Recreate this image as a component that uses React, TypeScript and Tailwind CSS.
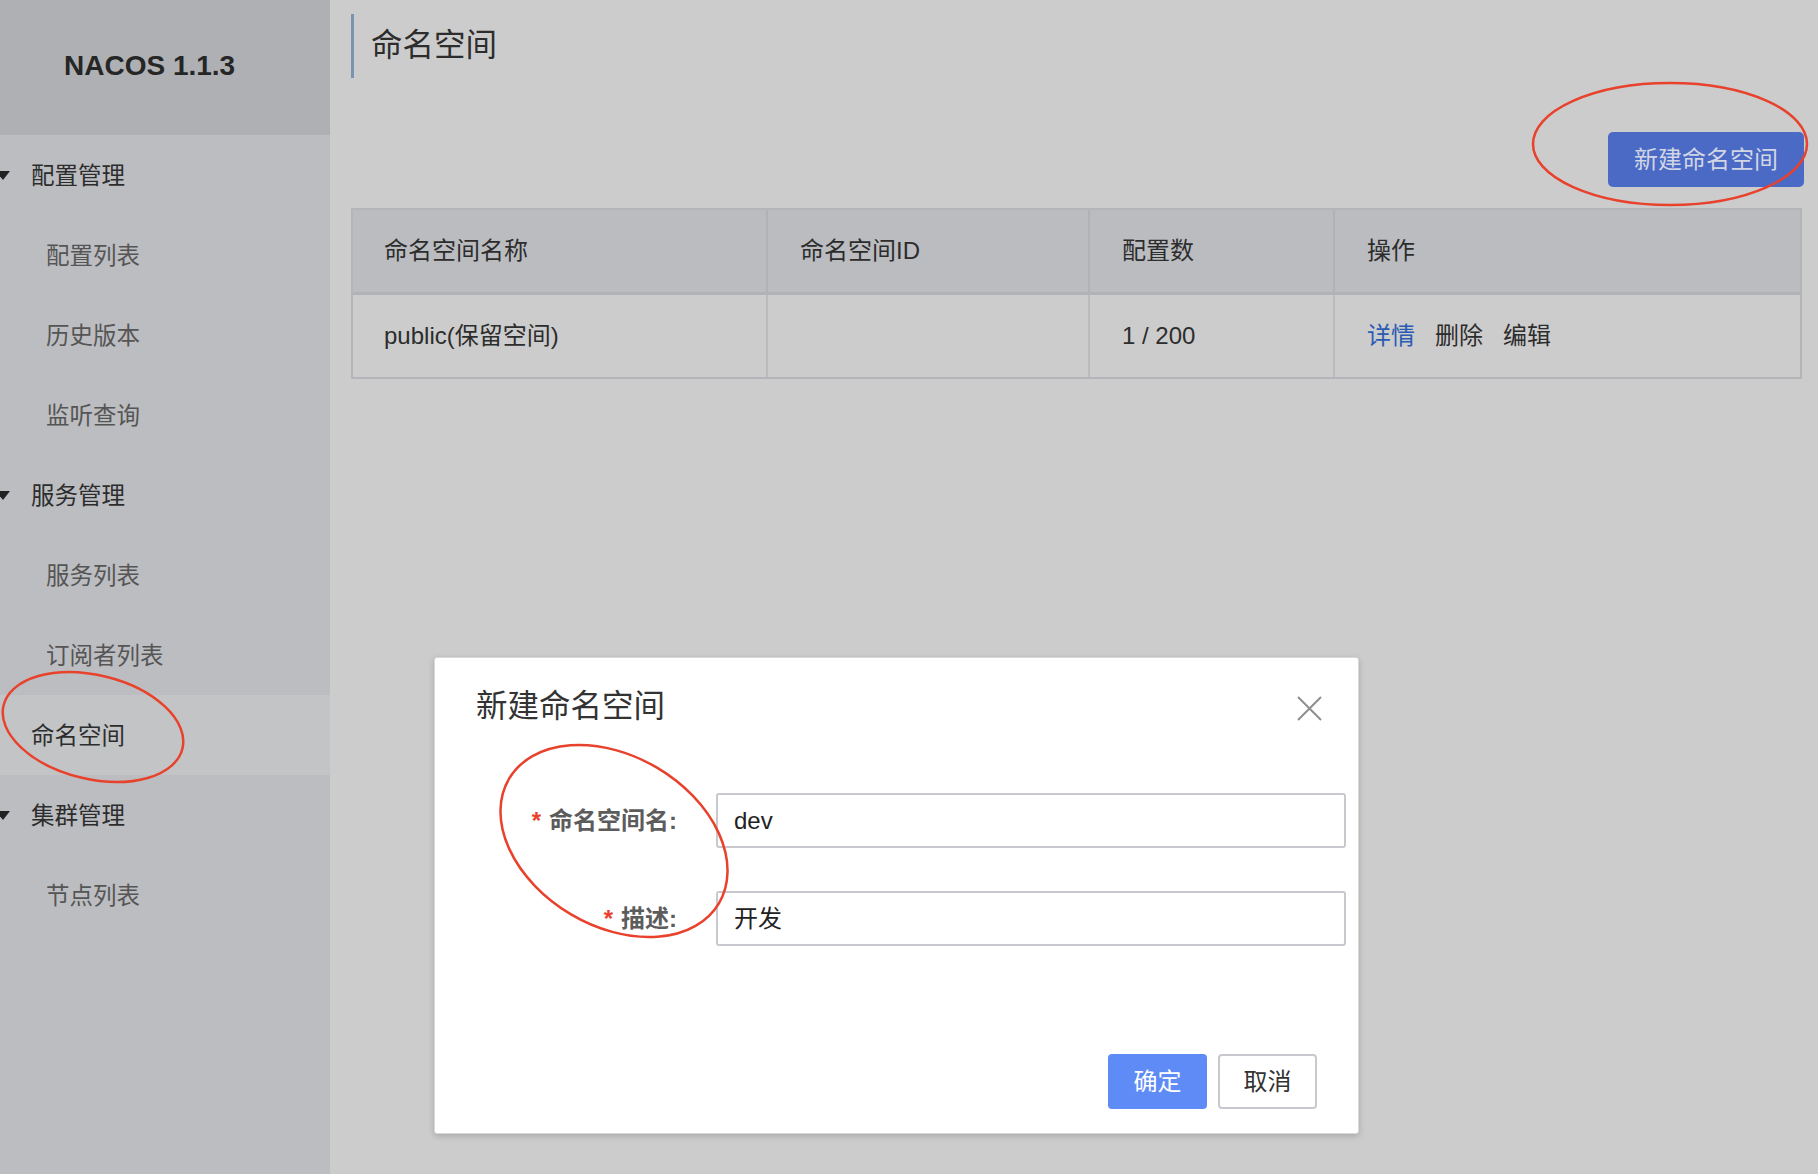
import React from "react";

const font = { fontFamily: '"Liberation Sans", "Noto Sans CJK SC", sans-serif' };

function Group({ label }: { label: string }) {
  return (
    <div className="relative flex h-[80px] items-center pl-[31px] pt-[4px] text-[23.5px] text-[#2d2d2d]">
      <span className="absolute left-[-4px] top-[36px] h-0 w-0 border-l-[7px] border-r-[7px] border-t-[9px] border-l-transparent border-r-transparent border-t-[#222]" />
      {label}
    </div>
  );
}

function Item({ label, active }: { label: string; active?: boolean }) {
  return (
    <div
      className={
        "flex h-[80px] items-center pt-[4px] text-[23.5px] " +
        (active ? "bg-[#c3c4c6] pl-[31px] text-[#2d2d2d]" : "pl-[46px] text-[#555]")
      }
    >
      {label}
    </div>
  );
}

export default function App() {
  return (
    <div className="relative flex h-[1174px] w-[1818px] overflow-hidden bg-[#cccccc]" style={font}>
      {/* Sidebar */}
      <aside className="flex w-[330px] shrink-0 flex-col bg-[#bcbdc1]">
        <div className="flex h-[135px] items-center bg-[#aeb0b4] pb-[4px] pl-[64px] text-[28px] font-bold text-[#262626]">
          NACOS 1.1.3
        </div>
        <Group label="配置管理" />
        <Item label="配置列表" />
        <Item label="历史版本" />
        <Item label="监听查询" />
        <Group label="服务管理" />
        <Item label="服务列表" />
        <Item label="订阅者列表" />
        <Item label="命名空间" active />
        <Group label="集群管理" />
        <Item label="节点列表" />
      </aside>

      {/* Main */}
      <main className="flex flex-1 flex-col pl-[21px] pr-[16px] pt-[14px]">
        <div className="flex h-[64px] items-center border-l-[3px] border-[#7b93b3] pl-[17px] text-[31.5px] text-[#2d2d2d]">
          命名空间
        </div>
        <div className="mt-[54px] flex justify-end">
          <button className="mr-[-2px] h-[55px] w-[196px] rounded-[5px] bg-[#4a6ac6] text-[24px] text-[#d2d6e4]">
            新建命名空间
          </button>
        </div>
        <div className="mt-[21px] border-2 border-[#b4b5b9] text-[24px] text-[#2d2d2d]">
          <div className="grid h-[85px] grid-cols-[415px_322px_245px_1fr] border-b-[3px] border-[#b1b2b6] bg-[#bbbcc0]">
            <div className="flex items-center border-r-2 border-[#b1b2b6] pl-[31px]">命名空间名称</div>
            <div className="flex items-center border-r-2 border-[#b1b2b6] pl-[32px]">命名空间ID</div>
            <div className="flex items-center border-r-2 border-[#b1b2b6] pl-[32px]">配置数</div>
            <div className="flex items-center pl-[32px]">操作</div>
          </div>
          <div className="grid h-[82px] grid-cols-[415px_322px_245px_1fr] bg-[#cccccc]">
            <div className="flex items-center border-r-2 border-[#b9babe] pl-[31px]">public(保留空间)</div>
            <div className="border-r-2 border-[#b9babe]" />
            <div className="flex items-center border-r-2 border-[#b9babe] pl-[32px]">1 / 200</div>
            <div className="flex items-center gap-[20px] pl-[32px]">
              <span className="text-[#2a5bb3]">详情</span>
              <span>删除</span>
              <span>编辑</span>
            </div>
          </div>
        </div>
      </main>

      {/* Modal */}
      <div className="absolute left-[434px] top-[657px] flex h-[477px] w-[925px] flex-col rounded-[3px] border border-[#d8d8d8] bg-white shadow-[0_2px_6px_rgba(0,0,0,0.18)]">
        <div className="flex items-center justify-between pl-[41px] pr-[36px] pt-[25px]">
          <div className="text-[31.5px] text-[#333]">新建命名空间</div>
          <svg width="25" height="25" viewBox="0 0 25 25" className="mt-[4px]">
            <path d="M1 1 L24 24 M24 1 L1 24" stroke="#8f8f8f" strokeWidth="2" />
          </svg>
        </div>
        <div className="mt-[63px] flex flex-col gap-[43px] pr-[12px]">
          <div className="flex items-center">
            <label className="w-[242px] text-right text-[24px] font-bold text-[#5c5c5c]">
              <span className="mr-[8px] text-[#e8412c]">*</span>命名空间名:
            </label>
            <div className="ml-[39px] flex h-[55px] flex-1 items-center rounded-[3px] border-2 border-[#c8c9ce] pl-[16px] text-[24px] text-[#222]">
              dev
            </div>
          </div>
          <div className="flex items-center">
            <label className="w-[242px] text-right text-[24px] font-bold text-[#5c5c5c]">
              <span className="mr-[8px] text-[#e8412c]">*</span>描述:
            </label>
            <div className="ml-[39px] flex h-[55px] flex-1 items-center rounded-[3px] border-2 border-[#c8c9ce] pl-[16px] text-[24px] text-[#222]">
              开发
            </div>
          </div>
        </div>
        <div className="mt-auto flex justify-end gap-[11px] pb-[24px] pr-[41px]">
          <button className="h-[55px] w-[99px] rounded-[4px] bg-[#5e8bf5] text-[24px] text-white">确定</button>
          <button className="h-[55px] w-[99px] rounded-[4px] border-2 border-[#c8c9ce] bg-white text-[24px] text-[#333]">
            取消
          </button>
        </div>
      </div>

      {/* Annotation ellipses */}
      <svg className="pointer-events-none absolute left-0 top-0" width="1818" height="1174" viewBox="0 0 1818 1174">
        <ellipse cx="1670" cy="144" rx="137" ry="61" fill="none" stroke="#e8412c" strokeWidth="2.5" />
        <ellipse cx="93" cy="727" rx="92" ry="52" transform="rotate(13.5 93 727)" fill="none" stroke="#e8412c" strokeWidth="2.5" />
        <ellipse cx="614" cy="841" rx="122" ry="85" transform="rotate(30.7 614 841)" fill="none" stroke="#e8412c" strokeWidth="2.5" />
      </svg>
    </div>
  );
}
